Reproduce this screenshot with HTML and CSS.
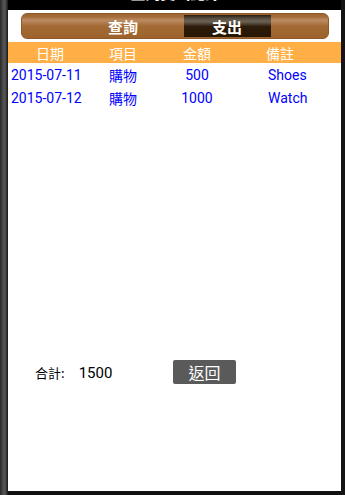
FILE: index.html
```html
<!DOCTYPE html>
<html lang="zh-Hant">
<head>
<meta charset="utf-8">
<title>查詢支出紀錄</title>
<link rel="stylesheet" href="styles.css">
</head>
<body>
<div class="frame">
  <div class="edge-left"></div>
  <div class="screen">
    <div class="titlebar"><span class="title">查詢支出紀錄</span></div>
    <div class="content">
      <div class="segmented">
        <div class="seg">查詢</div>
        <div class="seg seg-active">支出</div>
      </div>
      <div class="table">
        <div class="row head">
          <div class="c c1">日期</div>
          <div class="c c2">項目</div>
          <div class="c c3">金額</div>
          <div class="c c4">備註</div>
        </div>
        <div class="row data">
          <div class="c c1">2015-07-11</div>
          <div class="c c2">購物</div>
          <div class="c c3">500</div>
          <div class="c c4">Shoes</div>
        </div>
        <div class="row data">
          <div class="c c1">2015-07-12</div>
          <div class="c c2">購物</div>
          <div class="c c3">1000</div>
          <div class="c c4">Watch</div>
        </div>
      </div>
      <div class="summary">
        <div class="total"><span class="total-label">合計:</span><span class="total-value">1500</span></div>
        <div class="btn">返回</div>
      </div>
    </div>
    <div class="bottombar"></div>
  </div>
  <div class="edge-right"></div>
</div>
</body>
</html>
```
FILE: styles.css
```css
html, body {
  margin: 0;
  padding: 0;
  background: #111;
}
body {
  font-family: Roboto, "Noto Sans CJK TC", sans-serif;
}
.frame {
  display: flex;
  width: 345px;
  height: 495px;
  overflow: hidden;
}
.edge-left {
  width: 8px;
  flex: none;
  background: linear-gradient(to right, #2b2b2b 0%, #3c3c3c 25%, #5a5a5a 50%, #444 75%, #141414 100%);
}
.edge-right {
  width: 4px;
  flex: none;
  background: #141414;
}
.screen {
  flex: 1;
  display: flex;
  flex-direction: column;
  background: #fff;
}
.titlebar {
  height: 10px;
  flex: none;
  background: #000;
  overflow: hidden;
  text-align: center;
}
.title {
  display: block;
  color: #fff;
  font-size: 15px;
  font-weight: bold;
  line-height: 15px;
  margin-top: -13px;
  padding-left: 2px;
}
.content {
  flex: 1;
  display: flex;
  flex-direction: column;
}
.segmented {
  margin: 3px 12px 3px 13px;
  height: 26px;
  box-sizing: border-box;
  border: 1px solid #8e5a2a;
  border-radius: 6px;
  background: linear-gradient(#9c6430 0%, #a56d3a 12%, #bb8b62 25%, #b27f52 35%, #a46a34 50%, #9e632c 100%);
  display: flex;
  justify-content: center;
  align-items: center;
  gap: 17px;
}
.seg {
  width: 87px;
  height: 22px;
  display: flex;
  align-items: center;
  justify-content: center;
  color: #fff;
  font-weight: bold;
  font-size: 15px;
  font-family: "Noto Sans CJK TC", sans-serif;
}
.seg-active {
  background: linear-gradient(#2c1e10 0%, #5c5346 18%, #6a6152 30%, #4a3e30 42%, #2d1b09 52%, #281605 100%);
}
.row {
  display: grid;
  grid-template-columns: 80px 70px 78px 105px;
  align-items: center;
  font-size: 14px;
}
.head {
  height: 21px;
  background: #ffaf45;
  color: #fff;
  font-family: "Noto Sans CJK TC", sans-serif;
}
.data {
  height: 23px;
  color: #0000ff;
}
.c {
  text-align: center;
  white-space: nowrap;
  line-height: 20px;
}
.head .c1 {
  padding-left: 4px;
}
.head .c4 {
  padding-right: 17px;
}
.data .c1 {
  text-align: left;
  padding-left: 3px;
}
.data .c2 {
  font-family: "Noto Sans CJK TC", sans-serif;
}
.data .c4 {
  text-align: left;
  padding-left: 32px;
}
.summary {
  margin-top: 251px;
  display: flex;
  align-items: center;
  height: 24px;
  padding-left: 27px;
}
.total {
  width: 138px;
  font-size: 14px;
  color: #000;
}
.total-label {
  font-family: "Noto Sans CJK TC", sans-serif;
  font-size: 13px;
}
.total-value {
  margin-left: 14px;
  font-size: 15px;
}
.btn {
  width: 63px;
  height: 24px;
  background: #5a5a5a;
  border-radius: 2px;
  color: #fff;
  font-size: 16px;
  font-family: "Noto Sans CJK SC", sans-serif;
  display: flex;
  align-items: center;
  justify-content: center;
}
.bottombar {
  height: 4px;
  flex: none;
  margin-top: auto;
  background: #111;
}
```
